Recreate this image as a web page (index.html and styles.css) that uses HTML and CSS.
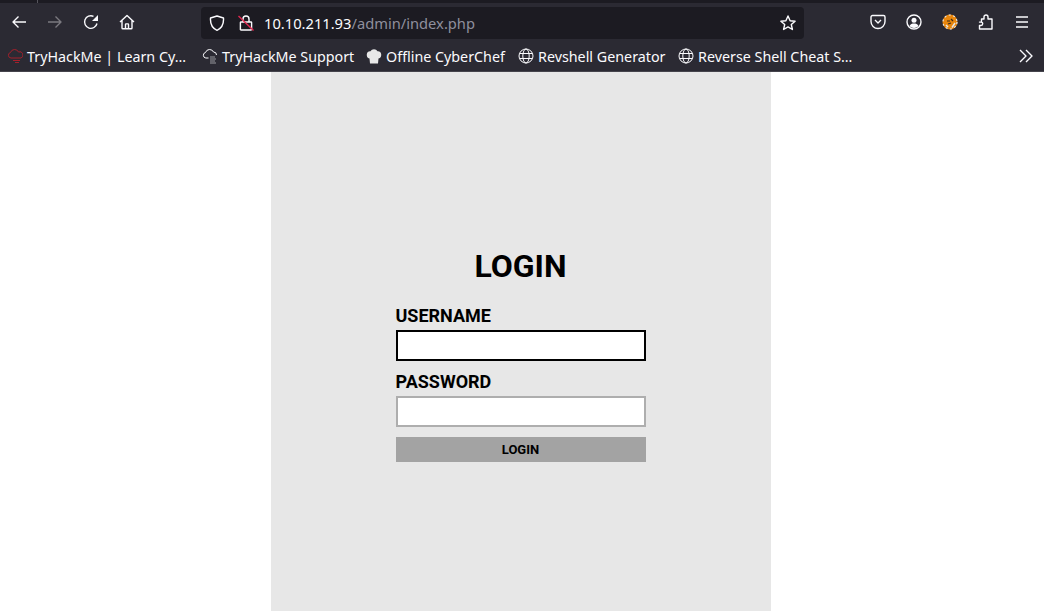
FILE: index.html
```html
<!DOCTYPE html>
<html lang="en">
<head>
  <meta charset="UTF-8" />
  <title>Login</title>
  <link rel="stylesheet" href="styles.css">
</head>
<body>

  <div class="browser">
    <div class="tabstrip"><span class="tab-edge"></span></div>

    <div class="toolbar">
      <div class="nav">
        <svg class="icon" viewBox="0 0 16 16"><path d="M15 8H2M7.500 2.500 2 8l5.500 5.500"/></svg>
        <svg class="icon dim" viewBox="0 0 16 16"><path d="M1 8h13M8.500 2.500 14 8l-5.500 5.500"/></svg>
        <svg class="icon" viewBox="0 0 16 16"><path d="M14 9.500A6.300 6.300 0 1 1 10.500 2.300"/><path class="solid" d="M15 1v6H9z"/></svg>
        <svg class="icon" viewBox="0 0 16 16"><path d="M1 8 8 1.500 15 8M3 6.500V14a.8.8 0 0 0 .8.8h8.400a.8.8 0 0 0 .8-.8V6.500M6.500 14.800V10.500a.6.6 0 0 1 .6-.6h1.800a.6.6 0 0 1 .6.600v4.300"/></svg>
      </div>

      <div class="urlbar">
        <svg class="icon shield" viewBox="0 0 16 16"><path d="M8 1 14.500 3c.4 6-1.500 10-6.500 12.300C3 13 1.100 9 1.500 3z"/></svg>
        <svg class="icon lock" viewBox="0 0 16 16"><path d="M5 7V4a3 3 0 0 1 6 0v3M3 7h10a.6.6 0 0 1 .6.600v6.800a.6.6 0 0 1-.6.600H3a.6.6 0 0 1-.6-.600V7.600A.6.6 0 0 1 3 7z"/><path class="slash" d="M.5 1 15.500 15.500"/></svg>
        <span class="url"><b>10.10.211.93</b>/admin/index.php</span>
        <svg class="icon star" viewBox="0 0 16 16"><path d="M8 1l2.100 4.700 5 .5-3.800 3.300 1.100 5L8 11.900l-4.400 2.600 1.100-5L.9 6.200l5-.5z"/></svg>
      </div>

      <div class="tools">
        <svg class="icon" viewBox="0 0 16 16"><path d="M2.500 1.500h11A1.500 1.500 0 0 1 15 3v4.500a7 7 0 0 1-14 0V3a1.500 1.500 0 0 1 1.500-1.500z"/><path d="M5 6l3 3 3-3"/></svg>
        <svg class="icon" viewBox="0 0 16 16"><circle cx="8" cy="8" r="7"/><circle class="solid" cx="8" cy="6.300" r="2.500"/><path class="solid" d="M3.500 12c1-2 2.500-2.500 4.500-2.500s3.500.5 4.500 2.500c-1 1.200-2.700 2-4.500 2s-3.500-.8-4.500-2z"/></svg>
        <svg class="icon ext" viewBox="0 0 16 16"><circle class="orange" cx="8" cy="8" r="7.500"/><circle class="ring" cx="8" cy="8" r="7"/><path class="specks" d="M10 13.500l3-4.500M4 11l2 2"/><path class="darks" d="M5 7h3M9 5l2 2M6 10l3-1"/></svg>
        <svg class="icon" viewBox="0 0 16 16"><path d="M3.500 5H6V3a2 2 0 0 1 4 0v2h4v10H1.500v-3.500H3a1.700 1.700 0 0 0 0-3.400H1.500V8.100h2z"/></svg>
        <svg class="icon" viewBox="0 0 16 16"><path d="M2 3h12M2 8h12M2 13h12"/></svg>
      </div>
    </div>

    <div class="bookmarks">
      <div class="mark mark-one">
        <svg class="icon fav red" viewBox="0 0 16 16"><path d="M4 10a2.800 2.800 0 0 1-.5-5.500A4.300 4.300 0 0 1 11.500 4a3 3 0 0 1 2.500 6z"/><path d="M6 12.500h7M8 14.500h4"/></svg>
        <span>TryHackMe | Learn Cy…</span>
      </div>
      <div class="mark mark-two">
        <svg class="icon fav" viewBox="0 0 16 16"><path d="M6.500 10H3.800a2.800 2.800 0 0 1-.3-5.500A4.300 4.300 0 0 1 11.500 4a3 3 0 0 1 3 3"/><path class="hatch" d="M8 9h5M8 11h6M8 13h5M8 15h6"/></svg>
        <span>TryHackMe Support</span>
      </div>
      <div class="mark mark-three">
        <svg class="icon fav" viewBox="0 0 16 16"><path class="chef" d="M3.500 10.500C1.200 10 .6 8 .8 6.200 1 4 2.800 3 4.500 3.300 5.200 2 6.500 1.300 8 1.300s2.800.7 3.500 2C13.200 3 15 4 15.200 6.200c.2 1.800-.4 3.800-2.700 4.300l-.5 5H4z"/></svg>
        <span>Offline CyberChef</span>
      </div>
      <div class="mark mark-four">
        <svg class="icon fav" viewBox="0 0 16 16"><circle cx="8" cy="8" r="7"/><ellipse cx="8" cy="8" rx="3.200" ry="7"/><path d="M1.500 5.500h13M1.500 10.500h13"/></svg>
        <span>Revshell Generator</span>
      </div>
      <div class="mark">
        <svg class="icon fav" viewBox="0 0 16 16"><circle cx="8" cy="8" r="7"/><ellipse cx="8" cy="8" rx="3.200" ry="7"/><path d="M1.500 5.500h13M1.500 10.500h13"/></svg>
        <span>Reverse Shell Cheat S…</span>
      </div>
      <svg class="icon more" viewBox="0 0 16 16"><path d="M2 2 8 8 2 14M8 2 14 8 8 14"/></svg>
    </div>
  </div>

  <div class="page">
    <div class="panel">
      <form class="login-form">
        <h1 class="login-title">LOGIN</h1>
        <label class="field-label" for="username">USERNAME</label>
        <input class="field field-focus" id="username" type="text">
        <label class="field-label" for="password">PASSWORD</label>
        <input class="field" id="password" type="password">
        <button class="login-btn" type="button">LOGIN</button>
      </form>
    </div>
  </div>

</body>
</html>
```

FILE: styles.css
```css
html, body {
  margin: 0;
  padding: 0;
  height: 611px;
  overflow: hidden;
  background: white;
}

body {
  display: flex;
  flex-direction: column;
  font-family: 'Roboto', sans-serif;
}

/* browser chrome */
.browser {
  flex: none;
  height: 72px;
  background: #2b2a33;
  color: #fbfbfe;
  font-family: 'Noto Sans', sans-serif;
  display: flex;
  flex-direction: column;
  box-shadow: inset 0 -1px #45444c;
}

.tabstrip {
  height: 3px;
  background: #1c1b22;
  padding-left: 37px;
}
.tab-edge {
  display: block;
  width: 1px;
  height: 3px;
  background: #55545c;
}

.toolbar {
  height: 38px;
  display: flex;
  align-items: center;
}

.icon {
  width: 16px;
  height: 16px;
  fill: none;
  stroke: #fbfbfe;
  stroke-width: 1.400;
  stroke-linejoin: round;
  flex: none;
}
.icon .solid {
  fill: #fbfbfe;
  stroke: none;
}
.icon.dim {
  stroke: #7b7a80;
}

.nav {
  width: 201px;
  display: flex;
  gap: 20px;
  padding-left: 11px;
  box-sizing: border-box;
  flex: none;
}

.urlbar {
  width: 603px;
  height: 32px;
  margin-top: 1px;
  background: #1c1b22;
  border-radius: 4px;
  display: flex;
  align-items: center;
  box-sizing: border-box;
  padding: 0 8px;
  flex: none;
}
.shield {
  margin-right: 13px;
}
.lock {
  margin-right: 10px;
}
.lock .slash {
  stroke: #e22850;
}
.url {
  flex: 1;
  font-size: 14.700px;
  color: #8f8f9d;
  white-space: nowrap;
}
.url b {
  font-weight: normal;
  color: #fbfbfe;
}

.tools {
  flex: 1;
  display: flex;
  gap: 20px;
  padding-left: 66px;
}
.ext {
  stroke: none;
}
.ext .orange {
  fill: #e8860c;
}
.ext .ring {
  stroke: #e6e6e6;
  stroke-width: 1.200;
  stroke-dasharray: 2 2.500;
}
.ext .specks {
  stroke: #e6e6e6;
  stroke-width: 1.500;
}
.ext .darks {
  stroke: #3a2a18;
  stroke-width: 1.200;
}

.bookmarks {
  height: 30px;
  display: flex;
  align-items: center;
  padding-left: 7px;
  font-size: 14.300px;
  white-space: nowrap;
}
.mark {
  display: flex;
  align-items: center;
  gap: 4px;
}
.mark-one {
  width: 195px;
}
.mark-two {
  width: 164px;
}
.mark-three {
  width: 152px;
}
.mark-four {
  width: 160px;
}
.fav {
  stroke-width: 1;
}
.fav.red {
  stroke: #a3202c;
}
.fav .hatch {
  stroke: #9a9aa0;
}
.fav .chef {
  fill: #e8e8e8;
  stroke: none;
}
.more {
  margin-left: auto;
  margin-right: 10px;
}

/* page */
.page {
  flex: 1;
  display: flex;
  justify-content: center;
  padding-right: 2px;
  min-height: 0;
}

.panel {
  width: 500px;
  background: #e7e7e7;
  display: flex;
  justify-content: center;
  align-items: flex-start;
  padding: 175px 1px 0 0;
  box-sizing: border-box;
}

.login-form {
  width: 250px;
  display: flex;
  flex-direction: column;
}

.login-title {
  margin: 0 0 20px;
  font-size: 32px;
  line-height: 38px;
  font-weight: bold;
  text-align: center;
  color: black;
}

.field-label {
  font-size: 18px;
  line-height: 21px;
  font-weight: bold;
  color: black;
  margin-bottom: 4px;
}

.field {
  height: 31px;
  box-sizing: border-box;
  border: 2px solid #aeaeae;
  background: white;
  padding: 0 6px;
  margin: 0 0 10px;
  outline: none;
}
.field-focus {
  border-color: black;
}

.login-btn {
  height: 25px;
  padding: 0;
  border: none;
  background: #a3a3a3;
  color: black;
  font-family: 'Roboto', sans-serif;
  font-size: 13px;
  font-weight: bold;
}
```
